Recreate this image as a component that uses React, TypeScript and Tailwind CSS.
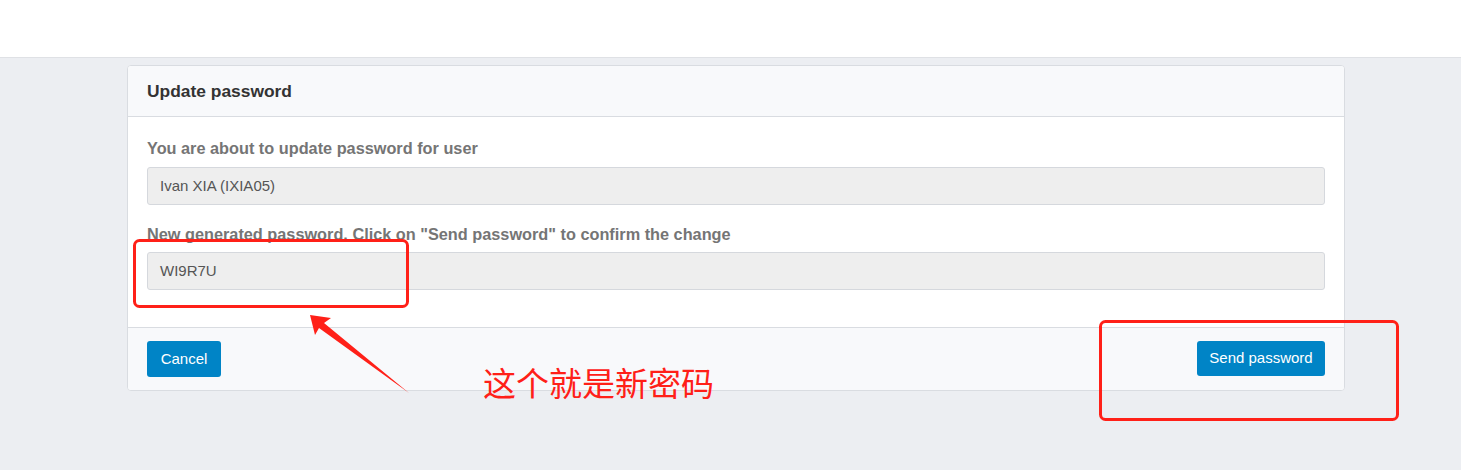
import React from "react";

export default function App() {
  return (
    <div
      className="relative min-h-[470px] w-full bg-[#eceef2]"
      style={{ fontFamily: '"Liberation Sans", Arial, sans-serif' }}
    >
      <div className="h-[58px] border-b border-[#dfe1e5] bg-white" />
      <div className="pl-[127px] pt-[7px]">
        <div className="w-[1218px] overflow-hidden rounded-[4px] border border-[#d9dce1] bg-white">
          <div className="flex h-[51px] items-center border-b border-[#d9dce1] bg-[#f8f9fb] px-[19px] pt-[1px]">
            <h3 className="text-[17.4px] font-bold text-[#333333]">Update password</h3>
          </div>
          <div className="px-[19px] pb-[37px] pt-[21px]">
            <div className="text-[16.3px] font-bold leading-[20px] text-[#757575]">
              You are about to update password for user
            </div>
            <div className="mt-[9px] flex h-[38px] items-center rounded-[3px] border border-[#d5d8dd] bg-[#eeeeee] px-[12px] text-[15px] text-[#555555]">
              Ivan XIA (IXIA05)
            </div>
            <div className="mt-[19px] text-[16.3px] font-bold leading-[20px] text-[#757575]">
              New generated password. Click on "Send password" to confirm the change
            </div>
            <div className="mt-[8px] flex h-[38px] items-center rounded-[3px] border border-[#d5d8dd] bg-[#eeeeee] px-[12px] text-[15px] text-[#555555]">
              WI9R7U
            </div>
          </div>
          <div className="flex items-center justify-between border-t border-[#d9dce1] bg-[#f8f9fb] px-[19px] pb-[13px] pt-[13px]">
            <button className="flex h-[36px] w-[74px] items-center justify-center rounded-[3px] bg-[#0084c6] text-[15px] text-white">
              Cancel
            </button>
            <button className="mb-[1px] flex h-[35px] w-[128px] items-center justify-center rounded-[3px] bg-[#0084c6] text-[15px] text-white">
              Send password
            </button>
          </div>
        </div>
      </div>

      <svg
        className="pointer-events-none absolute left-0 top-0"
        width="1461"
        height="470"
        viewBox="0 0 1461 470"
      >
        <rect x="134.5" y="240.5" width="273" height="66" rx="5" fill="none" stroke="#ff2018" strokeWidth="3" />
        <rect x="1100.5" y="321.5" width="297" height="98" rx="5" fill="none" stroke="#ff2018" strokeWidth="3" />
        <polygon
          points="310,315 331,318 324,323 409,393 319,328 315,335"
          fill="#ff2018"
        />
      </svg>
      <div
        className="absolute left-[483px] top-[362px] text-[33px] leading-[40px] text-[#ff2018]"
        style={{ fontFamily: '"Noto Sans CJK SC", sans-serif' }}
      >
        这个就是新密码
      </div>
    </div>
  );
}
